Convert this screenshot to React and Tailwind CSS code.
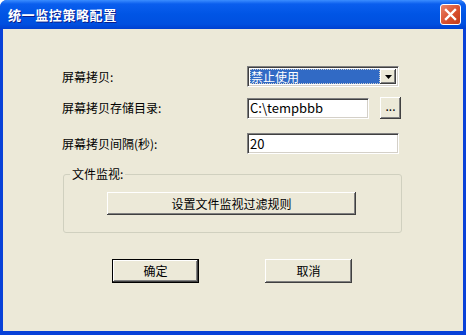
import React from "react";

const font = { fontFamily: '"Noto Sans CJK SC", "Liberation Sans", sans-serif' };

function Btn({ children, className = "", def = false }) {
  return (
    <div
      className={
        "flex items-center justify-center bg-[#ECE9D8] text-[12px] text-black " +
        (def
          ? "border border-black shadow-[inset_-1px_-1px_0_#404040,inset_1px_1px_0_#fff,inset_-2px_-2px_0_#808080] "
          : "shadow-[inset_-1px_-1px_0_#404040,inset_1px_1px_0_#fff,inset_-2px_-2px_0_#808080] ") +
        className
      }
    >
      {children}
    </div>
  );
}

const sunken =
  "border border-t-[#808080] border-l-[#808080] border-b-white border-r-white shadow-[inset_1px_1px_0_#404040,inset_-1px_-1px_0_#D4D0C8]";

export default function App() {
  return (
    <div
      className="w-[466px] h-[335px] flex flex-col bg-[#0841D8] rounded-t-[7px] overflow-hidden"
      style={font}
    >
      <div className="h-[29px] shrink-0 flex items-center justify-between pl-[8px] pr-[5px] bg-[linear-gradient(to_bottom,#3B8DFF_0px,#0A5EEE_4px,#0055E5_14px,#0050E0_24px,#0040D0_29px)]">
        <span className="text-white font-bold text-[13px] tracking-[0.6px] [text-shadow:1px_1px_0_#0A1E8C]">
          统一监控策略配置
        </span>
        <div className="w-[21px] h-[21px] rounded-[3px] border border-white bg-[linear-gradient(135deg,#E8836A,#D9502E_55%,#C23A1A)] flex items-center justify-center">
          <svg width="13" height="13" viewBox="0 0 13 13">
            <path d="M2 2 L11 11 M11 2 L2 11" stroke="white" strokeWidth="2.4" strokeLinecap="square" />
          </svg>
        </div>
      </div>
      <div className="flex-1 mx-[3px] mb-[4px] bg-[#ECE9D8] flex flex-col pl-[59px] pt-[37px] text-[12px] text-black">
        <div className="flex items-center h-[21px]">
          <div className="w-[185px]">屏幕拷贝:</div>
          <div className={"w-[152px] h-[21px] flex items-stretch bg-white " + sunken + " p-[2px]"}>
            <div className="flex-1 bg-[#316AC5] text-white leading-[15px] pl-[1px] outline outline-1 outline-dotted outline-[#CCC] -outline-offset-1">
              禁止使用
            </div>
            <Btn className="w-[16px]">
              <svg width="7" height="4" viewBox="0 0 7 4">
                <path d="M0 0 H7 L3.5 4 Z" fill="black" />
              </svg>
            </Btn>
          </div>
        </div>
        <div className="flex items-center h-[22px] mt-[10px]">
          <div className="w-[185px]">屏幕拷贝存储目录:</div>
          <div className={"w-[122px] h-[21px] bg-white flex items-center pl-[2px] text-[13px] " + sunken}>C:\tempbbb</div>
          <Btn className="w-[21px] h-[22px] ml-[11px] leading-none pb-[4px]">...</Btn>
        </div>
        <div className="flex items-center h-[21px] mt-[14px]">
          <div className="w-[185px]">屏幕拷贝间隔(秒):</div>
          <div className={"w-[152px] h-[21px] bg-white flex items-center pl-[2px] text-[13px] " + sunken}>20</div>
        </div>
        <fieldset className="mt-[13px] ml-[1px] w-[339px] h-[66px] border border-[#D0D0BF] rounded-[3px]">
          <legend className="ml-[6px] px-[2px] leading-[14px]">文件监视:</legend>
          <Btn className="ml-[43px] mt-[11px] w-[249px] h-[23px]">设置文件监视过滤规则</Btn>
        </fieldset>
        <div className="flex mt-[26px] ml-[50px] gap-[66px]">
          <Btn def className="w-[87px] h-[24px]">确定</Btn>
          <Btn className="w-[87px] h-[24px]">取消</Btn>
        </div>
      </div>
    </div>
  );
}
